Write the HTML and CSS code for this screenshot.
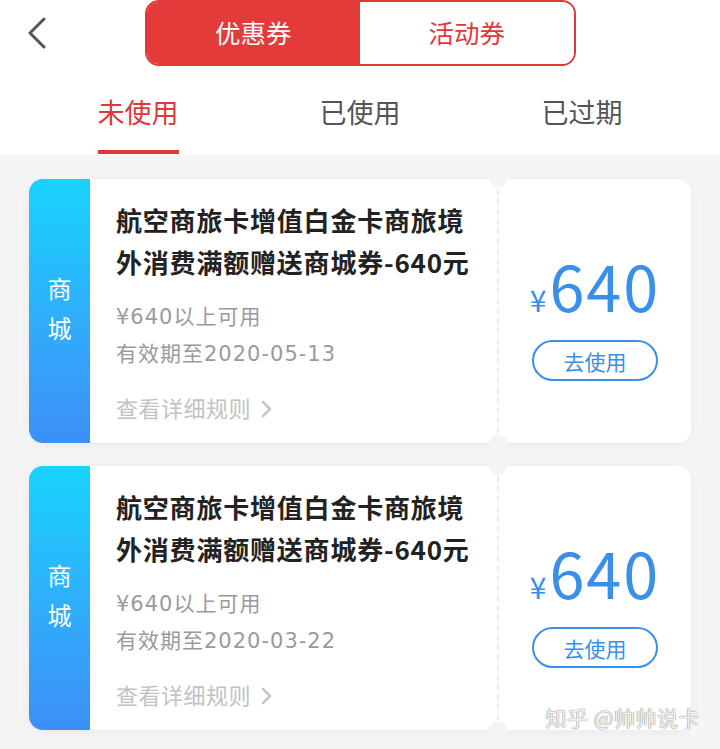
FILE: index.html
```html
<!DOCTYPE html>
<html lang="zh-CN">
<head>
<meta charset="utf-8">
<title>优惠券</title>
<link rel="stylesheet" href="styles.css">
</head>
<body>
<div class="page">
  <header class="header">
    <div class="topbar">
      <div class="back">
        <svg width="20" height="32" viewBox="0 0 20 32"><path d="M17 2 L3 16 L17 30" fill="none" stroke="#555" stroke-width="3" stroke-linecap="round" stroke-linejoin="round"/></svg>
      </div>
      <div class="segment">
        <div class="seg seg-active">优惠券</div>
        <div class="seg">活动券</div>
      </div>
      <div></div>
    </div>
    <nav class="tabs">
      <div class="tab tab-active"><span>未使用</span></div>
      <div class="tab"><span>已使用</span></div>
      <div class="tab"><span>已过期</span></div>
    </nav>
  </header>

  <main class="list">
    <section class="card">
      <div class="strip"><span>商</span><span>城</span></div>
      <div class="info">
        <h2 class="title">航空商旅卡增值白金卡商旅境<br>外消费满额赠送商城券-640元</h2>
        <p class="line">¥640以上可用</p>
        <p class="line">有效期至2020-05-13</p>
        <p class="rules">查看详细规则 <svg width="14" height="20" viewBox="0 0 14 20"><path d="M4 3 L11 10 L4 17" fill="none" stroke="#c6c6c6" stroke-width="2.6" stroke-linecap="round" stroke-linejoin="round"/></svg></p>
      </div>
      <div class="side">
        <div class="price"><span class="yen">¥</span><span class="amount">640</span></div>
        <div class="use">去使用</div>
      </div>
    </section>

    <section class="card">
      <div class="strip"><span>商</span><span>城</span></div>
      <div class="info">
        <h2 class="title">航空商旅卡增值白金卡商旅境<br>外消费满额赠送商城券-640元</h2>
        <p class="line">¥640以上可用</p>
        <p class="line">有效期至2020-03-22</p>
        <p class="rules">查看详细规则 <svg width="14" height="20" viewBox="0 0 14 20"><path d="M4 3 L11 10 L4 17" fill="none" stroke="#c6c6c6" stroke-width="2.6" stroke-linecap="round" stroke-linejoin="round"/></svg></p>
      </div>
      <div class="side">
        <div class="price"><span class="yen">¥</span><span class="amount">640</span></div>
        <div class="use">去使用</div>
      </div>
    </section>
  </main>
  <div class="watermark">知乎 @帅帅说卡</div>
</div>
</body>
</html>
```
FILE: styles.css
```css
* { box-sizing: border-box; }
html, body {
  margin: 0;
  padding: 0;
  background: #f5f5f5;
  font-family: "Noto Sans CJK SC", "Noto Sans", sans-serif;
}
.page {
  position: relative;
  width: 720px;
  height: 749px;
  overflow: hidden;
}
.header {
  background: #fff;
  height: 155px;
}
.topbar {
  display: grid;
  grid-template-columns: 1fr 431px 1fr;
  height: 80px;
}
.back {
  padding: 17px 0 0 27px;
}
.back svg { display: block; }
.segment {
  display: flex;
  height: 66px;
  border: 2px solid #e0383a;
  border-radius: 14px;
  overflow: hidden;
}
.seg {
  flex: 1;
  display: flex;
  align-items: center;
  justify-content: center;
  font-size: 25.5px;
  padding-bottom: 3px;
  color: #e0383a;
  background: #fff;
}
.seg-active {
  background: #e33a3a;
  color: #fff;
}
.tabs {
  display: grid;
  grid-template-columns: repeat(3, 1fr);
  padding: 0 27px;
  height: 75px;
}
.tab {
  display: flex;
  justify-content: center;
}
.tab span {
  display: block;
  font-size: 27px;
  line-height: 36px;
  padding-top: 14px;
  height: 75px;
  color: #555;
}
.tab-active span {
  color: #e0383a;
  border-bottom: 4px solid #e0383a;
  height: 74px;
}
.list {
  display: flex;
  flex-direction: column;
  gap: 23px;
  padding: 24px 29px 0 29px;
}
.card {
  display: flex;
  height: 264px;
  background: #fff;
  border-radius: 14px;
  box-shadow: 0 2px 12px rgba(0,0,0,0.05);
}
.strip {
  width: 61px;
  border-radius: 14px 0 0 14px;
  background: linear-gradient(180deg, #17d4fd 0%, #2fb0fa 50%, #3c8ff8 100%);
  color: #fff;
  font-size: 24px;
  line-height: 40px;
  display: flex;
  flex-direction: column;
  align-items: center;
  justify-content: center;
  padding-bottom: 6px;
}
.info {
  flex: 1;
  padding: 20px 0 0 26px;
}
.title {
  margin: 0 0 16px 0;
  font-size: 26px;
  line-height: 42px;
  font-weight: 700;
  color: #222;
  letter-spacing: 0.8px;
}
.line {
  margin: 0;
  font-family: "DejaVu Sans", "Noto Sans CJK SC", sans-serif;
  font-size: 21px;
  line-height: 37px;
  color: #9a9a9a;
  letter-spacing: 1px;
}
.rules {
  margin: 16px 0 0 0;
  font-size: 22px;
  line-height: 37px;
  color: #c2c2c2;
  display: flex;
  align-items: center;
  gap: 8px;
  letter-spacing: 0.5px;
}
.rules svg { display: block; margin-top: 2px; }
.side {
  position: relative;
  width: 194px;
  border-left: 2px dashed #eeeeee;
  display: flex;
  flex-direction: column;
  align-items: center;
  justify-content: center;
  padding-top: 12px;
}
.side::before,
.side::after {
  content: "";
  position: absolute;
  left: -10px;
  width: 18px;
  height: 18px;
  border-radius: 50%;
  background: #f5f5f5;
}
.side::before { top: -9px; }
.side::after { bottom: -9px; }
.price {
  display: flex;
  align-items: baseline;
  color: #3a8fe8;
  line-height: 1;
}
.yen {
  font-size: 30px;
  margin-right: 3px;
}
.amount {
  font-size: 63px;
  letter-spacing: 2px;
}
.use {
  margin-top: 24px;
  width: 126px;
  height: 41px;
  border: 2px solid #3a8fe8;
  border-radius: 21px;
  color: #3a8fe8;
  font-size: 21px;
  display: flex;
  align-items: center;
  justify-content: center;
}
.watermark {
  position: absolute;
  right: 20px;
  bottom: 17px;
  font-size: 21px;
  color: #f0f0f0;
  text-shadow: 0 0 1px #8a8a8a, 0 0 1px #8a8a8a;
  letter-spacing: 0.5px;
}
```
